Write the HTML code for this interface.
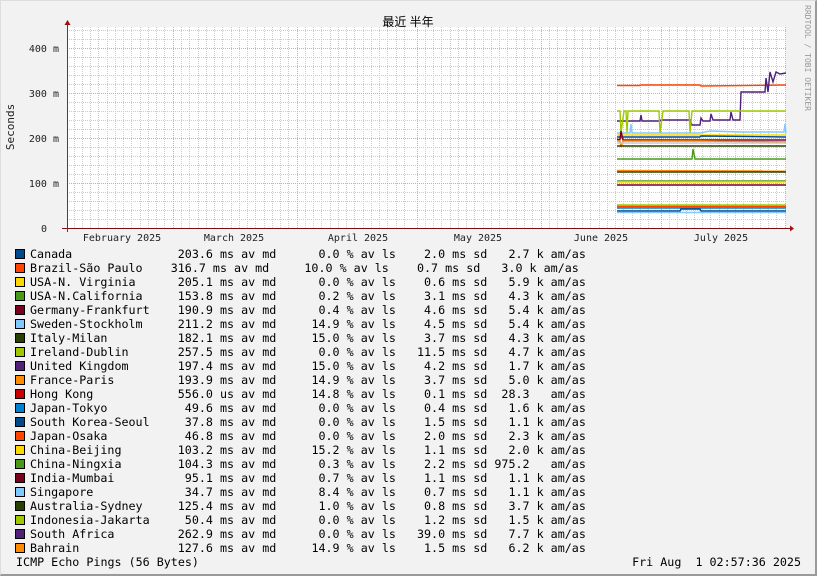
<!DOCTYPE html>
<html><head><meta charset="utf-8"><style>
html,body{margin:0;padding:0}
body{width:817px;height:576px;position:relative;background:#f2f2f2;overflow:hidden;font-family:"DejaVu Sans Mono","Liberation Mono",monospace;color:#000}
.frame{position:absolute;left:0;top:0;border-top:1px solid #ddd;border-left:1px solid #ddd;border-right:2px solid #9a9a9a;border-bottom:2px solid #9a9a9a;width:814px;height:573px}
.leg{position:absolute;left:30px;top:247px;font-size:11.7px;line-height:14px}
.row{display:flex;height:14px;white-space:pre}
.row span{display:inline-block;white-space:pre}
.n{width:21ch}.b{width:20ch}.v{width:5ch;text-align:right}.u1{width:9ch}.l{width:9ch;text-align:right}.u2{width:8ch}.s{width:7ch;text-align:right}.u3{width:6ch}.a{width:6ch;text-align:right}
.sw{position:absolute;left:15px;width:8px;height:8px;border:1px solid #000}
.t{position:absolute;font-size:11.7px;white-space:pre}
</style></head><body>
<div class="frame"></div>
<svg width="817" height="576" style="position:absolute;left:0;top:0" xmlns="http://www.w3.org/2000/svg">
<rect x="67" y="27" width="719" height="201" fill="#fff"/>
<g stroke="#ccc" stroke-dasharray="1,1" stroke-width="1">
<path d="M67 30.5H786M67 39.5H786M67 57.5H786M67 66.5H786M67 75.5H786M67 84.5H786M67 102.5H786M67 111.5H786M67 120.5H786M67 129.5H786M67 147.5H786M67 156.5H786M67 165.5H786M67 174.5H786M67 192.5H786M67 201.5H786M67 210.5H786M67 219.5H786"/>
<path d="M74.5 27V228M82.5 27V228M90.5 27V228M98.5 27V228M107.5 27V228M115.5 27V228M123.5 27V228M131.5 27V228M140.5 27V228M148.5 27V228M156.5 27V228M164.5 27V228M181.5 27V228M189.5 27V228M198.5 27V228M206.5 27V228M214.5 27V228M222.5 27V228M231.5 27V228M239.5 27V228M247.5 27V228M255.5 27V228M264.5 27V228M272.5 27V228M280.5 27V228M288.5 27V228M305.5 27V228M313.5 27V228M321.5 27V228M330.5 27V228M338.5 27V228M346.5 27V228M354.5 27V228M363.5 27V228M371.5 27V228M379.5 27V228M387.5 27V228M396.5 27V228M404.5 27V228M425.5 27V228M433.5 27V228M441.5 27V228M450.5 27V228M458.5 27V228M466.5 27V228M474.5 27V228M483.5 27V228M491.5 27V228M499.5 27V228M507.5 27V228M516.5 27V228M524.5 27V228M532.5 27V228M549.5 27V228M557.5 27V228M566.5 27V228M574.5 27V228M582.5 27V228M590.5 27V228M599.5 27V228M607.5 27V228M615.5 27V228M623.5 27V228M632.5 27V228M640.5 27V228M648.5 27V228M669.5 27V228M677.5 27V228M686.5 27V228M694.5 27V228M702.5 27V228M710.5 27V228M719.5 27V228M727.5 27V228M735.5 27V228M743.5 27V228M752.5 27V228M760.5 27V228M768.5 27V228M776.5 27V228"/>
</g>
<g stroke="#e8a0a0" stroke-dasharray="1,1" stroke-width="1">
<path d="M67 48.5H786M67 93.5H786M67 138.5H786M67 183.5H786"/>
<path d="M173.5 27V228M297.5 27V228M417.5 27V228M541.5 27V228M661.5 27V228M785.5 27V228"/>
</g>
<g fill="none" stroke-width="1.4">
<polyline stroke="#ff4500" points="617,85.5 640,85.5 641,85 700,85 701,86 786,85"/>
<polyline stroke="#50207a" points="617,121 640,121 641,115 642,121 660,121 661,120 690,120 692,125 700,125 701,118 703,121 710,121 711,114 713,120 730,120 731,112 733,120 740,120 741,92 765,92 766,78 768,92 770,72 773,82 776,72 780,74 786,73"/>
<polyline stroke="#a0c800" points="617,111 620,111 621,133 624,111 626,111 627,133 628,111 659,111 660,133 663,111 689,111 690,133 692,111 786,111"/>
<polyline stroke="#80c8ff" points="617,133 630,133 631,124 632,133 700,133 710,131 740,132 784,132 785,124 786,133"/>
<polyline stroke="#ffd700" points="617,135 786,135"/>
<polyline stroke="#004a8c" points="617,137 700,137 701,136 786,137"/>
<polyline stroke="#7a0020" points="617,139.5 620,139.5 621,131 623,140 786,140"/>
<polyline stroke="#ff8c00" points="617,141 620,141 621,147 623,141 700,141 786,142"/>
<polyline stroke="#c8c8c8" points="617,143 786,143"/>
<polyline stroke="#2a4000" points="617,146 786,146"/>
<polyline stroke="#4a9a1a" points="617,159 692,159 693,149 695,159 786,159"/>
<polyline stroke="#ff8c00" points="617,170.5 786,171"/>
<polyline stroke="#2a4000" points="617,172 786,172"/>
<polyline stroke="#4a9a1a" points="617,181 786,181"/>
<polyline stroke="#ffd700" points="617,182 786,182"/>
<polyline stroke="#7a0020" points="617,185 786,185"/>
<polyline stroke="#a0c800" points="617,205 786,205"/>
<polyline stroke="#ff4500" points="617,206.5 786,206.5"/>
<polyline stroke="#0080d0" points="617,208 786,208"/>
<polyline stroke="#004a8c" points="617,211 680,211 681,209 700,209 701,211 786,211"/>
<polyline stroke="#80c8ff" points="617,212.5 786,212.5"/>
</g>
<path d="M62 228.5H790" stroke="#7a1010" stroke-width="1"/>
<path d="M67.5 22V232" stroke="#444" stroke-width="1"/>
<path d="M790 225.5L794 228.5L790 231.5Z" fill="#a01010"/>
<path d="M64.5 25L67.5 20L70.5 25Z" fill="#a01010"/>
<g font-family="DejaVu Sans Mono, Liberation Mono, monospace" font-size="10" fill="#222">
<text x="59" y="52" text-anchor="end">400 m</text>
<text x="59" y="97" text-anchor="end">300 m</text>
<text x="59" y="142" text-anchor="end">200 m</text>
<text x="59" y="187" text-anchor="end">100 m</text>
<text x="47" y="232" text-anchor="end">0</text>
<text x="122" y="241" text-anchor="middle">February 2025</text>
<text x="234" y="241" text-anchor="middle">March 2025</text>
<text x="358" y="241" text-anchor="middle">April 2025</text>
<text x="478" y="241" text-anchor="middle">May 2025</text>
<text x="601" y="241" text-anchor="middle">June 2025</text>
<text x="721" y="241" text-anchor="middle">July 2025</text>
<text transform="translate(14,127) rotate(-90)" text-anchor="middle" font-size="11">Seconds</text>
<text transform="translate(805,5) rotate(90)" font-size="8" fill="#999">RRDTOOL / TOBI OETIKER</text>
</g>
<text x="408" y="26" text-anchor="middle" font-family="Liberation Sans, Noto Sans CJK SC, sans-serif" font-size="12" fill="#000">最近 半年</text>
</svg>
<div class="sw" style="top:249px;background:#004a8c"></div>
<div class="sw" style="top:263px;background:#ff4500"></div>
<div class="sw" style="top:277px;background:#ffd700"></div>
<div class="sw" style="top:291px;background:#4a9a1a"></div>
<div class="sw" style="top:305px;background:#7a0020"></div>
<div class="sw" style="top:319px;background:#80c8ff"></div>
<div class="sw" style="top:333px;background:#2a4000"></div>
<div class="sw" style="top:347px;background:#a0c800"></div>
<div class="sw" style="top:361px;background:#50207a"></div>
<div class="sw" style="top:375px;background:#ff8c00"></div>
<div class="sw" style="top:389px;background:#c80000"></div>
<div class="sw" style="top:403px;background:#0080d0"></div>
<div class="sw" style="top:417px;background:#004a8c"></div>
<div class="sw" style="top:431px;background:#ff4500"></div>
<div class="sw" style="top:445px;background:#ffd700"></div>
<div class="sw" style="top:459px;background:#4a9a1a"></div>
<div class="sw" style="top:473px;background:#7a0020"></div>
<div class="sw" style="top:487px;background:#80c8ff"></div>
<div class="sw" style="top:501px;background:#2a4000"></div>
<div class="sw" style="top:515px;background:#a0c800"></div>
<div class="sw" style="top:529px;background:#50207a"></div>
<div class="sw" style="top:543px;background:#ff8c00"></div>
<div class="leg"><div class="row"><span class="n">Canada</span><span class="v">203.6</span><span class="u1"> ms av md</span><span class="l">0.0</span><span class="u2"> % av ls</span><span class="s">2.0</span><span class="u3"> ms sd</span><span class="a">2.7</span><span> k am/as</span></div><div class="row"><span class="b">Brazil-São Paulo</span><span class="v">316.7</span><span class="u1"> ms av md</span><span class="l">10.0</span><span class="u2"> % av ls</span><span class="s">0.7</span><span class="u3"> ms sd</span><span class="a">3.0</span><span> k am/as</span></div><div class="row"><span class="n">USA-N. Virginia</span><span class="v">205.1</span><span class="u1"> ms av md</span><span class="l">0.0</span><span class="u2"> % av ls</span><span class="s">0.6</span><span class="u3"> ms sd</span><span class="a">5.9</span><span> k am/as</span></div><div class="row"><span class="n">USA-N.California</span><span class="v">153.8</span><span class="u1"> ms av md</span><span class="l">0.2</span><span class="u2"> % av ls</span><span class="s">3.1</span><span class="u3"> ms sd</span><span class="a">4.3</span><span> k am/as</span></div><div class="row"><span class="n">Germany-Frankfurt</span><span class="v">190.9</span><span class="u1"> ms av md</span><span class="l">0.4</span><span class="u2"> % av ls</span><span class="s">4.6</span><span class="u3"> ms sd</span><span class="a">5.4</span><span> k am/as</span></div><div class="row"><span class="n">Sweden-Stockholm</span><span class="v">211.2</span><span class="u1"> ms av md</span><span class="l">14.9</span><span class="u2"> % av ls</span><span class="s">4.5</span><span class="u3"> ms sd</span><span class="a">5.4</span><span> k am/as</span></div><div class="row"><span class="n">Italy-Milan</span><span class="v">182.1</span><span class="u1"> ms av md</span><span class="l">15.0</span><span class="u2"> % av ls</span><span class="s">3.7</span><span class="u3"> ms sd</span><span class="a">4.3</span><span> k am/as</span></div><div class="row"><span class="n">Ireland-Dublin</span><span class="v">257.5</span><span class="u1"> ms av md</span><span class="l">0.0</span><span class="u2"> % av ls</span><span class="s">11.5</span><span class="u3"> ms sd</span><span class="a">4.7</span><span> k am/as</span></div><div class="row"><span class="n">United Kingdom</span><span class="v">197.4</span><span class="u1"> ms av md</span><span class="l">15.0</span><span class="u2"> % av ls</span><span class="s">4.2</span><span class="u3"> ms sd</span><span class="a">1.7</span><span> k am/as</span></div><div class="row"><span class="n">France-Paris</span><span class="v">193.9</span><span class="u1"> ms av md</span><span class="l">14.9</span><span class="u2"> % av ls</span><span class="s">3.7</span><span class="u3"> ms sd</span><span class="a">5.0</span><span> k am/as</span></div><div class="row"><span class="n">Hong Kong</span><span class="v">556.0</span><span class="u1"> us av md</span><span class="l">14.8</span><span class="u2"> % av ls</span><span class="s">0.1</span><span class="u3"> ms sd</span><span class="a">28.3</span><span>   am/as</span></div><div class="row"><span class="n">Japan-Tokyo</span><span class="v">49.6</span><span class="u1"> ms av md</span><span class="l">0.0</span><span class="u2"> % av ls</span><span class="s">0.4</span><span class="u3"> ms sd</span><span class="a">1.6</span><span> k am/as</span></div><div class="row"><span class="n">South Korea-Seoul</span><span class="v">37.8</span><span class="u1"> ms av md</span><span class="l">0.0</span><span class="u2"> % av ls</span><span class="s">1.5</span><span class="u3"> ms sd</span><span class="a">1.1</span><span> k am/as</span></div><div class="row"><span class="n">Japan-Osaka</span><span class="v">46.8</span><span class="u1"> ms av md</span><span class="l">0.0</span><span class="u2"> % av ls</span><span class="s">2.0</span><span class="u3"> ms sd</span><span class="a">2.3</span><span> k am/as</span></div><div class="row"><span class="n">China-Beijing</span><span class="v">103.2</span><span class="u1"> ms av md</span><span class="l">15.2</span><span class="u2"> % av ls</span><span class="s">1.1</span><span class="u3"> ms sd</span><span class="a">2.0</span><span> k am/as</span></div><div class="row"><span class="n">China-Ningxia</span><span class="v">104.3</span><span class="u1"> ms av md</span><span class="l">0.3</span><span class="u2"> % av ls</span><span class="s">2.2</span><span class="u3"> ms sd</span><span class="a">975.2</span><span>   am/as</span></div><div class="row"><span class="n">India-Mumbai</span><span class="v">95.1</span><span class="u1"> ms av md</span><span class="l">0.7</span><span class="u2"> % av ls</span><span class="s">1.1</span><span class="u3"> ms sd</span><span class="a">1.1</span><span> k am/as</span></div><div class="row"><span class="n">Singapore</span><span class="v">34.7</span><span class="u1"> ms av md</span><span class="l">8.4</span><span class="u2"> % av ls</span><span class="s">0.7</span><span class="u3"> ms sd</span><span class="a">1.1</span><span> k am/as</span></div><div class="row"><span class="n">Australia-Sydney</span><span class="v">125.4</span><span class="u1"> ms av md</span><span class="l">1.0</span><span class="u2"> % av ls</span><span class="s">0.8</span><span class="u3"> ms sd</span><span class="a">3.7</span><span> k am/as</span></div><div class="row"><span class="n">Indonesia-Jakarta</span><span class="v">50.4</span><span class="u1"> ms av md</span><span class="l">0.0</span><span class="u2"> % av ls</span><span class="s">1.2</span><span class="u3"> ms sd</span><span class="a">1.5</span><span> k am/as</span></div><div class="row"><span class="n">South Africa</span><span class="v">262.9</span><span class="u1"> ms av md</span><span class="l">0.0</span><span class="u2"> % av ls</span><span class="s">39.0</span><span class="u3"> ms sd</span><span class="a">7.7</span><span> k am/as</span></div><div class="row"><span class="n">Bahrain</span><span class="v">127.6</span><span class="u1"> ms av md</span><span class="l">14.9</span><span class="u2"> % av ls</span><span class="s">1.5</span><span class="u3"> ms sd</span><span class="a">6.2</span><span> k am/as</span></div></div>
<div class="t" style="left:16px;top:555px">ICMP Echo Pings (56 Bytes)</div>
<div class="t" style="right:16px;top:555px">Fri Aug  1 02:57:36 2025</div>
</body></html>
